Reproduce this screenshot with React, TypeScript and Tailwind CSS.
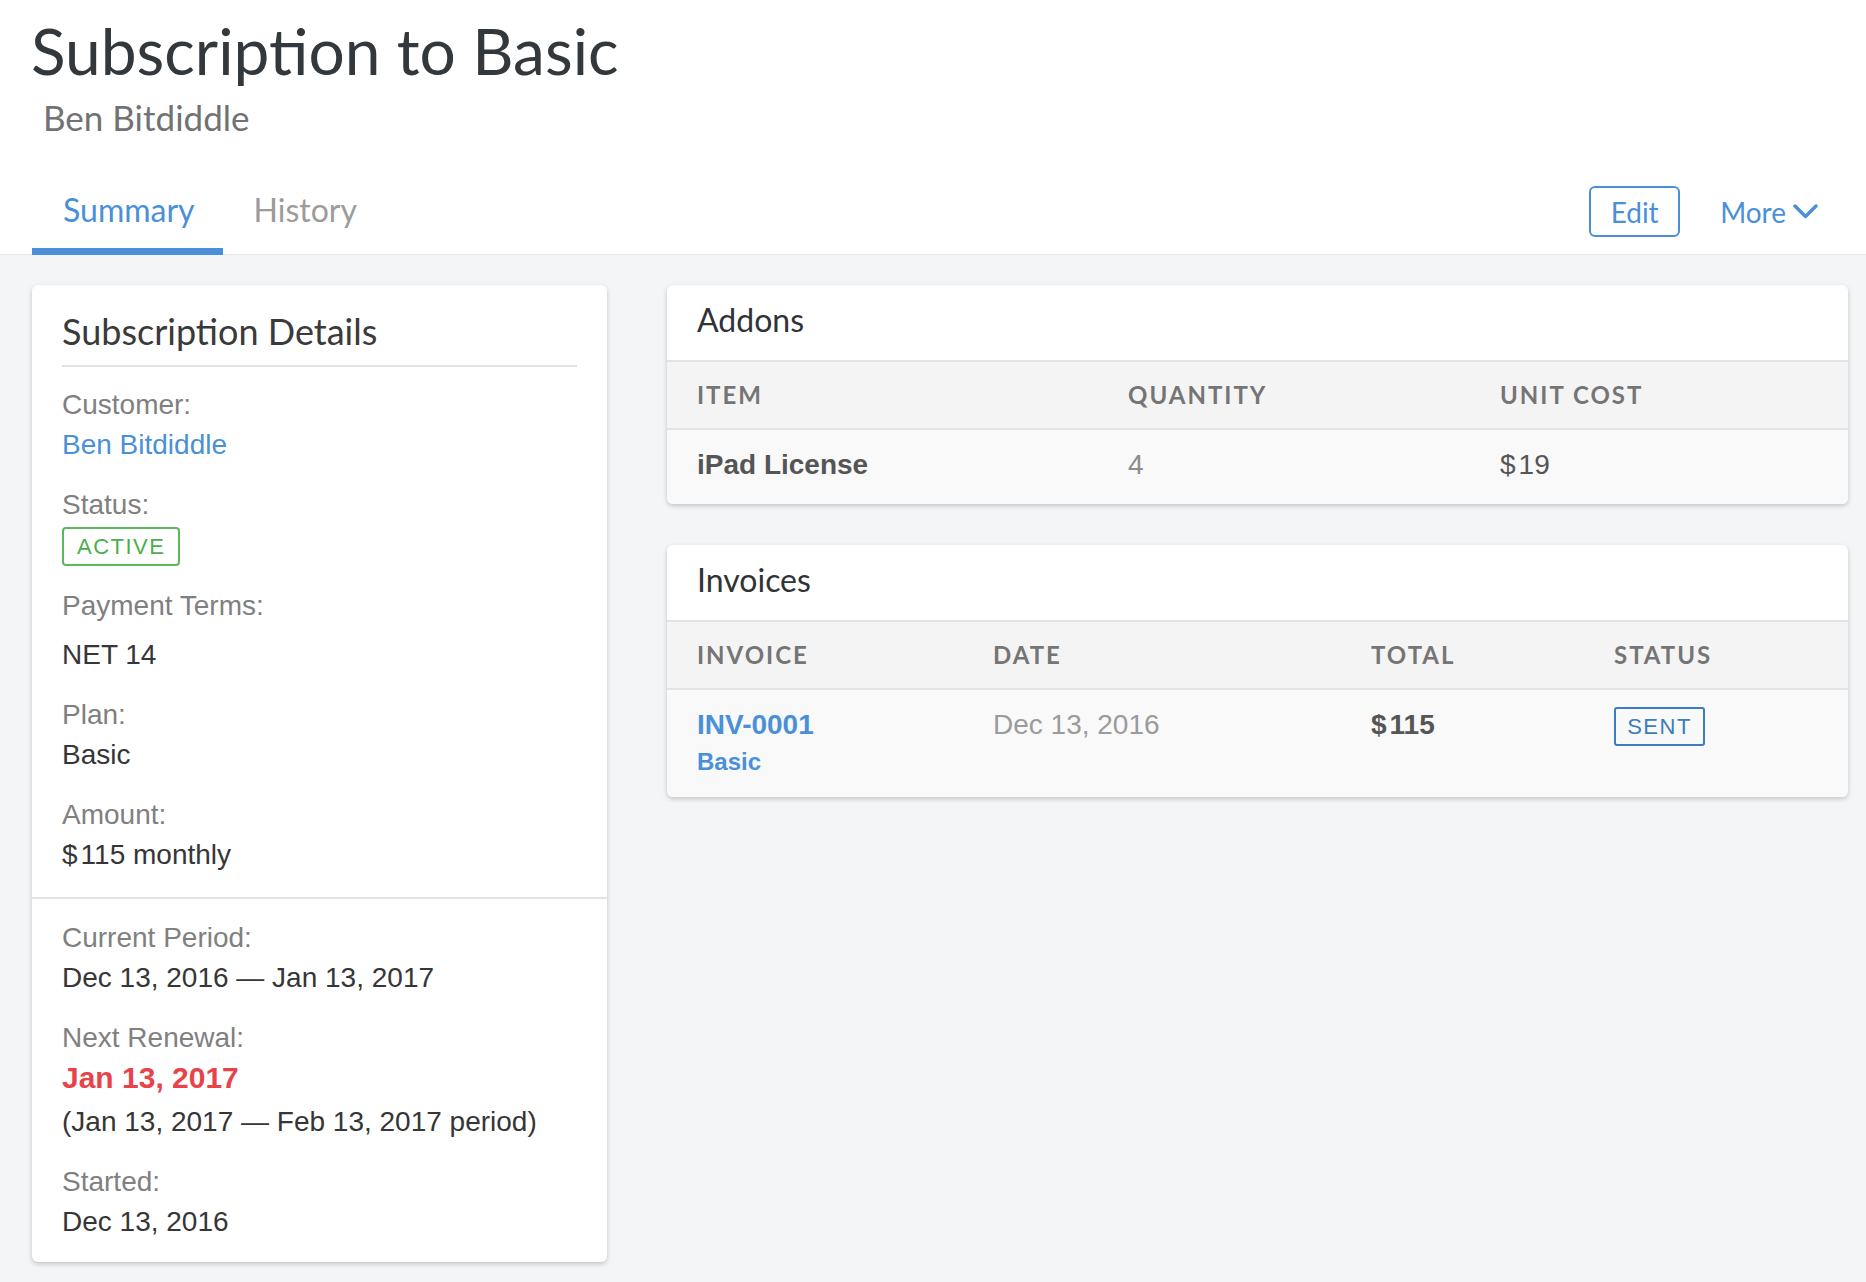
const lato = "font-['Lato','Liberation_Sans',sans-serif]";
const helv = "font-['Liberation_Sans','Arial',sans-serif]";

function Field({ label, children, className = '' }: { label: string; children: React.ReactNode; className?: string }) {
  return (
    <div className={className}>
      <div className="text-[28px] leading-[40px] text-[#808080]">{label}</div>
      {children}
    </div>
  );
}

function Value({ children, className = '' }: { children: React.ReactNode; className?: string }) {
  return <div className={`text-[28px] leading-[40px] text-[#363636] ${className}`}>{children}</div>;
}

function Money({ amount }: { amount: string }) {
  return (
    <>
      <span className="mr-[3px]">$</span>
      {amount}
    </>
  );
}

function CardHeader({ title }: { title: string }) {
  return (
    <div className={`${lato} px-[30px] pt-[15px] pb-[20px] border-b-2 border-[#e3e3e3] text-[32px] leading-[40px] text-[#2f3336]`}>
      {title}
    </div>
  );
}

function HeadCell({ children }: { children: React.ReactNode }) {
  return (
    <div className={`${lato} px-[30px] flex items-center h-[66px] text-[24px] leading-[30px] font-bold tracking-[2px] text-[#757575]`}>
      {children}
    </div>
  );
}

export default function App() {
  return (
    <div className={`${helv} min-h-screen w-[1866px] bg-[#f4f5f7]`}>
      {/* Page header */}
      <header className="bg-white border-b border-[#e8e8eb]">
        <h1 className={`${lato} pl-[31px] pt-[19px] text-[64px] leading-[64px] text-[#33383d]`}>Subscription to Basic</h1>
        <div className={`${lato} pl-[43px] mt-[14px] text-[35px] leading-[40px] text-[#727272]`}>Ben Bitdiddle</div>

        <div className="flex items-start justify-between pl-[32px] pr-[48px] mt-[49px] -mb-px">
          <nav className={`${lato} flex text-[32px] leading-[40px]`}>
            <div className="pl-[31px] pr-[28px] pt-[4px] pb-[18px] border-b-[7px] border-[#4a90d9] text-[#4a90d9]">Summary</div>
            <div className="px-[31px] pt-[4px] pb-[18px] border-b-[7px] border-transparent text-[#9b9b9b]">History</div>
          </nav>
          <div className={`${lato} flex items-center gap-[40px] text-[28px] leading-[40px] text-[#4a90d9]`}>
            <button className="h-[51px] w-[91px] rounded-[6px] border-2 border-[#4a90d9] flex items-center justify-center">
              Edit
            </button>
            <button className="h-[51px] flex items-center gap-[7px]">
              More
              <svg width="25" height="15" viewBox="0 0 25 15" fill="none">
                <polyline points="2,2 12.5,12.5 23,2" stroke="#4a90d9" strokeWidth="3.4" strokeLinecap="round" strokeLinejoin="round" />
              </svg>
            </button>
          </div>
        </div>
      </header>

      <main className="flex items-start gap-[60px] pl-[32px] pr-[18px] pt-[30px] pb-[20px]">
        {/* Subscription details */}
        <section className="w-[575px] shrink-0 bg-white rounded-[6px] shadow-[0_2px_5px_rgba(0,0,0,0.2)]">
          <div className="px-[30px] pt-[18px] pb-[22px]">
            <h2 className={`${lato} pt-[8px] pb-[14px] border-b-2 border-[#e3e3e3] text-[36px] leading-[40px] text-[#3a3a3a]`}>
              Subscription Details
            </h2>
            <div className="flex flex-col gap-[20px] mt-[18px]">
              <Field label="Customer:">
                <Value className="!text-[#4a90d9]">Ben Bitdiddle</Value>
              </Field>
              <Field label="Status:">
                <div className="mt-[2px] inline-flex items-center h-[39px] px-[13px] border-2 border-[#5cb85c] rounded-[4px] text-[22px] tracking-[1.5px] text-[#4cae4c]">
                  ACTIVE
                </div>
              </Field>
              <Field label="Payment Terms:">
                <Value className="mt-[9px]">NET 14</Value>
              </Field>
              <Field label="Plan:">
                <Value>Basic</Value>
              </Field>
              <Field label="Amount:">
                <Value>
                  <Money amount="115 monthly" />
                </Value>
              </Field>
            </div>
          </div>
          <div className="border-t-2 border-[#e3e3e3] px-[30px] pt-[19px] pb-[20px] flex flex-col gap-[20px]">
            <Field label="Current Period:">
              <Value>Dec 13, 2016 — Jan 13, 2017</Value>
            </Field>
            <Field label="Next Renewal:">
              <div className="text-[30px] leading-[40px] font-bold text-[#e8434b]">Jan 13, 2017</div>
              <Value className="mt-[4px]">(Jan 13, 2017 — Feb 13, 2017 period)</Value>
            </Field>
            <Field label="Started:">
              <Value>Dec 13, 2016</Value>
            </Field>
          </div>
        </section>

        <div className="flex-1 flex flex-col gap-[41px]">
          {/* Addons */}
          <section className="bg-white rounded-[6px] shadow-[0_2px_5px_rgba(0,0,0,0.2)] overflow-hidden">
            <CardHeader title="Addons" />
            <div className="grid grid-cols-[431px_372px_1fr] bg-[#f4f4f4] border-b-2 border-[#e3e3e3]">
              <HeadCell>ITEM</HeadCell>
              <HeadCell>QUANTITY</HeadCell>
              <HeadCell>UNIT COST</HeadCell>
            </div>
            <div className="grid grid-cols-[431px_372px_1fr] bg-[#f9f9f9] pt-[15px] pb-[19px] text-[28px] leading-[40px]">
              <div className="px-[30px] font-bold text-[#555555]">iPad License</div>
              <div className="px-[30px] text-[#8c8c8c]">4</div>
              <div className="px-[30px] text-[#555555]">
                <Money amount="19" />
              </div>
            </div>
          </section>

          {/* Invoices */}
          <section className="bg-white rounded-[6px] shadow-[0_2px_5px_rgba(0,0,0,0.2)] overflow-hidden">
            <CardHeader title="Invoices" />
            <div className="grid grid-cols-[296px_378px_243px_1fr] bg-[#f4f4f4] border-b-2 border-[#e3e3e3]">
              <HeadCell>INVOICE</HeadCell>
              <HeadCell>DATE</HeadCell>
              <HeadCell>TOTAL</HeadCell>
              <HeadCell>STATUS</HeadCell>
            </div>
            <div className="grid grid-cols-[296px_378px_243px_1fr] bg-[#f9f9f9] pt-[15px] pb-[18px]">
              <div className="px-[30px] font-bold text-[#4a90d9]">
                <div className="text-[28px] leading-[40px]">INV-0001</div>
                <div className="text-[24px] leading-[34px]">Basic</div>
              </div>
              <div className="px-[30px] text-[28px] leading-[40px] text-[#9b9b9b]">Dec 13, 2016</div>
              <div className="px-[30px] text-[28px] leading-[40px] font-bold text-[#555555]">
                <Money amount="115" />
              </div>
              <div className="px-[30px]">
                <div className="mt-[2px] inline-flex items-center justify-center h-[39px] w-[91px] border-2 border-[#3a7dc0] rounded-[3px] text-[22px] tracking-[1.5px] text-[#3a7dc0]">
                  SENT
                </div>
              </div>
            </div>
          </section>
        </div>
      </main>
    </div>
  );
}
